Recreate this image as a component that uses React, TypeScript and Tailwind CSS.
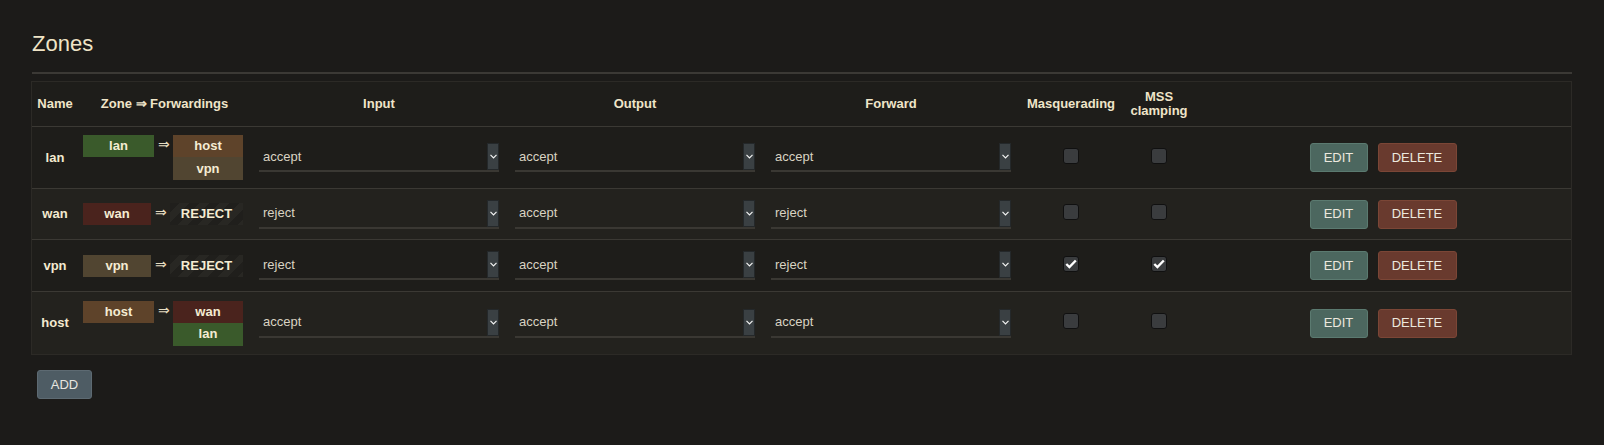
import React from "react";

const COLORS: Record<string, string> = {
  lan: "bg-[#3a5a2b]",
  host: "bg-[#5e432a]",
  vpn: "bg-[#514531]",
  wan: "bg-[#4a231d]",
};

type Row = {
  name: string;
  zoneW: string;
  fwdW: string;
  fwd: string[] | null;
  input: string;
  output: string;
  forward: string;
  masq: boolean;
  mss: boolean;
  h: string;
  bg: string;
};

const rows: Row[] = [
  { name: "lan", zoneW: "w-[71px]", fwdW: "w-[70px]", fwd: ["host", "vpn"], input: "accept", output: "accept", forward: "accept", masq: false, mss: false, h: "h-[62px]", bg: "bg-[#1e1d1a]" },
  { name: "wan", zoneW: "w-[68px]", fwdW: "w-[73px]", fwd: null, input: "reject", output: "accept", forward: "reject", masq: false, mss: false, h: "h-[51px]", bg: "bg-[#23221e]" },
  { name: "vpn", zoneW: "w-[68px]", fwdW: "w-[73px]", fwd: null, input: "reject", output: "accept", forward: "reject", masq: true, mss: true, h: "h-[52px]", bg: "bg-[#1e1d1a]" },
  { name: "host", zoneW: "w-[71px]", fwdW: "w-[70px]", fwd: ["wan", "lan"], input: "accept", output: "accept", forward: "accept", masq: false, mss: false, h: "h-[63px]", bg: "bg-[#23221e]" },
];

const grid = "grid grid-cols-[46px_173px_256px_256px_256px_104px_72px_1fr]";

function Select({ value }: { value: string }) {
  return (
    <div className="flex h-[29px] items-stretch border-b-2 border-[#3a3833]">
      <div className="flex flex-1 items-center pl-1 text-[13px] text-[#d9d3c2]">{value}</div>
      <div className="flex w-[12px] items-center justify-center border border-[#24282a] bg-[#3a4043]">
        <svg width="7" height="5" viewBox="0 0 7 5">
          <path d="M0.5 0.8 L3.5 3.8 L6.5 0.8" stroke="#f4f4f4" strokeWidth="1.2" fill="none" />
        </svg>
      </div>
    </div>
  );
}

function Check({ on }: { on: boolean }) {
  return (
    <div className="flex h-[16px] w-[16px] items-center justify-center rounded-[3px] border border-[#101010] bg-[#3a3c3e]">
      {on && (
        <svg width="12" height="10" viewBox="0 0 12 10">
          <path d="M1.3 5 L4.4 8 L10.8 1.5" stroke="#ffffff" strokeWidth="2.4" fill="none" />
        </svg>
      )}
    </div>
  );
}

export default function App() {
  return (
    <div className="min-h-[445px] w-[1604px] bg-[#1c1b19] pl-[31px] pr-[32px] pt-[31px] font-['Liberation_Sans',Arial,sans-serif] text-[#f1e7cc]">
      <h2 className="ml-[1px] text-[22px] leading-[26px] text-[#efe4c6]">Zones</h2>
      <div className="ml-[1px] mt-[15px] h-[2px] bg-[#3b3935]" />
      <div className="mt-[7px] border border-[#2c2a26] bg-[#1e1d1a]">
        <div className={`${grid} h-[44px] items-center text-[13px] font-bold leading-[14px] text-[#efe5c9]`}>
          <div className="text-center">Name</div>
          <div className="text-center">Zone ⇒ Forwardings</div>
          <div className="text-center">Input</div>
          <div className="text-center">Output</div>
          <div className="text-center">Forward</div>
          <div className="text-center">Masquerading</div>
          <div className="text-center">MSS<br />clamping</div>
          <div />
        </div>
        {rows.map((r) => (
          <div key={r.name} className={`${grid} ${r.h} ${r.bg} items-center border-t border-[#3b3934]`}>
            <div className="text-center text-[13px] font-bold text-[#f3ead0]">{r.name}</div>
            <div className="flex items-start pl-[5px] text-[13px] font-bold text-[#f5ecd3]">
              <div className={`${r.zoneW} ${COLORS[r.name]} flex h-[22px] items-center justify-center`}>{r.name}</div>
              <div className="w-[19px] pt-[2px] text-center text-[14px] font-normal leading-[14px] text-[#e6dcc0]">⇒</div>
              <div className={`${r.fwdW} flex flex-col`}>
                {r.fwd ? (
                  r.fwd.map((f, i) => (
                    <div key={f} className={`${COLORS[f]} flex ${i === 0 ? "h-[22px]" : "h-[23px]"} items-center justify-center`}>{f}</div>
                  ))
                ) : (
                  <div className="flex h-[22px] items-center justify-center bg-[repeating-linear-gradient(135deg,#201f1c_0px,#201f1c_7px,#282723_7px,#282723_14px)]">REJECT</div>
                )}
              </div>
            </div>
            <div className="px-2"><Select value={r.input} /></div>
            <div className="px-2"><Select value={r.output} /></div>
            <div className="px-2"><Select value={r.forward} /></div>
            <div className="flex justify-center pb-[4px]"><Check on={r.masq} /></div>
            <div className="flex justify-center pb-[4px]"><Check on={r.mss} /></div>
            <div className="flex justify-center gap-[10px] text-[13px] text-[#ece8de]">
              <button className="h-[29px] w-[58px] rounded-[3px] border border-[#5b7a70] bg-[#4c675f]">EDIT</button>
              <button className="h-[29px] w-[79px] rounded-[3px] border border-[#7b4636] bg-[#693a2e]">DELETE</button>
            </div>
          </div>
        ))}
      </div>
      <button className="ml-[6px] mt-[15px] h-[29px] w-[55px] rounded-[3px] border border-[#5d6a72] bg-[#4e5c64] text-[13px] text-[#e8e6e0]">ADD</button>
    </div>
  );
}
